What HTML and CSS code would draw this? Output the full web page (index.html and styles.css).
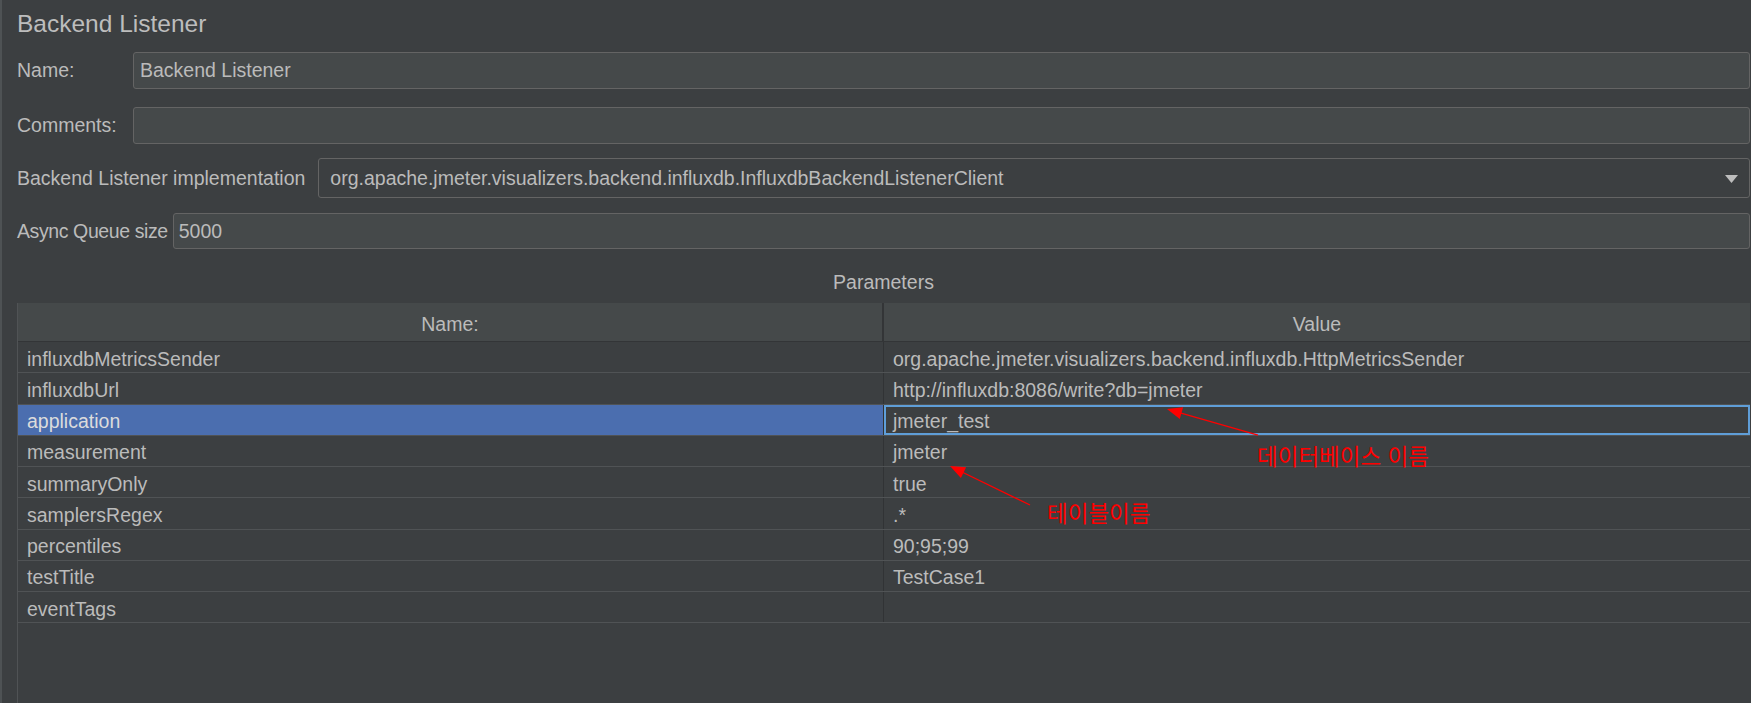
FILE: index.html
```html
<!DOCTYPE html>
<html lang="ko">
<head>
<meta charset="utf-8">
<title>Backend Listener</title>
<link rel="stylesheet" href="styles.css">
</head>
<body>
<div class="panel">
  <h1 class="title">Backend Listener</h1>

  <div class="form-grid">
    <div class="lbl">Name:</div>
    <div class="field">Backend Listener</div>
    <div class="lbl">Comments:</div>
    <div class="field"></div>
  </div>

  <div class="impl-row">
    <div class="lbl">Backend Listener implementation</div>
    <div class="combo">
      <span class="combo-text">org.apache.jmeter.visualizers.backend.influxdb.InfluxdbBackendListenerClient</span>
      <svg class="combo-arrow" width="13" height="8" viewBox="0 0 13 8"><polygon points="0,0 13,0 6.5,8" fill="#bdbdbd"/></svg>
    </div>
  </div>

  <div class="async-row">
    <div class="lbl lbl-async">Async Queue size</div>
    <div class="field field-async">5000</div>
  </div>

  <div class="params-title">Parameters</div>

  <div class="table">
    <div class="thead">
      <div class="th th-name">Name:</div>
      <div class="th">Value</div>
    </div>
    <div class="tr"><div class="td td-name">influxdbMetricsSender</div><div class="td">org.apache.jmeter.visualizers.backend.influxdb.HttpMetricsSender</div></div>
    <div class="tr"><div class="td td-name">influxdbUrl</div><div class="td">http://influxdb:8086/write?db=jmeter</div></div>
    <div class="tr tr-selected"><div class="td td-name">application</div><div class="td td-editor">jmeter_test</div></div>
    <div class="tr"><div class="td td-name">measurement</div><div class="td">jmeter</div></div>
    <div class="tr"><div class="td td-name">summaryOnly</div><div class="td">true</div></div>
    <div class="tr"><div class="td td-name">samplersRegex</div><div class="td">.*</div></div>
    <div class="tr"><div class="td td-name">percentiles</div><div class="td">90;95;99</div></div>
    <div class="tr"><div class="td td-name">testTitle</div><div class="td">TestCase1</div></div>
    <div class="tr"><div class="td td-name">eventTags</div><div class="td"></div></div>
    <div class="filler"></div>
  </div>
</div>

<svg class="annot-svg" width="1751" height="703" viewBox="0 0 1751 703">
  <line x1="1258" y1="435" x2="1181" y2="413" stroke="#ff0000" stroke-width="1.3"/>
  <polygon points="1167,409 1183.1,407.3 1179.8,418.9" fill="#ff0000"/>
  <line x1="1030" y1="505" x2="963" y2="472.5" stroke="#ff0000" stroke-width="1.3"/>
  <polygon points="950,466 966.1,467.2 960.9,478" fill="#ff0000"/>
</svg>
<span class="annot annot-db">데이터베이스 이름</span>
<span class="annot annot-table">테이블이름</span>
</body>
</html>
```

FILE: styles.css
```css
html, body {
  margin: 0;
  padding: 0;
  background: #3c3f41;
  overflow: hidden;
}

body {
  position: relative;
  width: 1751px;
  height: 703px;
  font-family: "Liberation Sans", Arial, sans-serif;
  font-size: 19.5px;
  color: #bbbbbb;
}

.panel {
  height: 703px;
  box-sizing: border-box;
  border-left: 2px solid #4e5254;
  padding-left: 15px;
  padding-right: 1px;
  display: flex;
  flex-direction: column;
}

.title {
  margin: 0;
  padding-top: 9.5px;
  font-size: 24.5px;
  line-height: 28px;
  font-weight: normal;
  color: #bdbdbd;
}

.lbl {
  display: flex;
  align-items: center;
  white-space: nowrap;
}

.lbl-async {
  letter-spacing: -0.4px;
}

.form-grid {
  margin-top: 14.5px;
  display: grid;
  grid-template-columns: 100px 1fr;
  grid-auto-rows: 37px;
  column-gap: 16px;
  row-gap: 18px;
}

.field {
  box-sizing: border-box;
  background: #45494a;
  border: 1px solid #646464;
  border-radius: 3px;
  padding-left: 6px;
  display: flex;
  align-items: center;
  white-space: nowrap;
}

.impl-row {
  margin-top: 14px;
  height: 40px;
  display: flex;
  gap: 13px;
}

.combo {
  flex: 1;
  box-sizing: border-box;
  background: #3c3f41;
  border: 1px solid #646464;
  border-radius: 3px;
  padding: 0 11px 0 11px;
  display: flex;
  align-items: center;
  justify-content: space-between;
}

.combo-text {
  white-space: nowrap;
}

.combo-arrow {
  display: block;
  margin-top: 1px;
}

.async-row {
  margin-top: 15px;
  height: 36px;
  display: flex;
  gap: 5px;
}

.field-async {
  flex: 1;
  padding-left: 5px;
}

.params-title {
  margin-top: 22.25px;
  line-height: 22px;
  text-align: center;
}

.table {
  margin-top: 9.75px;
  flex: 1;
  border-left: 1px solid #505355;
  display: flex;
  flex-direction: column;
}

.thead {
  height: 39px;
  flex: none;
  box-sizing: border-box;
  background: #45494a;
  border-bottom: 1px solid #333537;
  display: grid;
  grid-template-columns: 1fr 1fr;
}

.th {
  display: flex;
  align-items: center;
  justify-content: center;
  padding-top: 4px;
  box-sizing: border-box;
}

.th-name {
  border-right: 2px solid #333537;
}

.tr {
  height: 31.25px;
  flex: none;
  box-sizing: border-box;
  border-bottom: 1px solid #505355;
  display: grid;
  grid-template-columns: 1fr 1fr;
}

.td {
  display: flex;
  align-items: center;
  padding: 4px 0 0 9px;
  box-sizing: border-box;
  white-space: nowrap;
  overflow: hidden;
}

.td-name {
  border-right: 1px solid #313335;
}

.tr-selected .td-name {
  background: #4b6eaf;
  color: #dcdcdc;
}

.tr-selected .td-editor {
  border: 2px solid #5f9ed8;
  padding-left: 7px;
  background: #3c3f41;
}

.filler {
  flex: 1;
}

.annot-svg {
  position: absolute;
  top: 0;
  left: 0;
  pointer-events: none;
}

.annot {
  position: absolute;
  font-family: "Noto Sans CJK KR", "Noto Sans", sans-serif;
  font-size: 22.5px;
  line-height: 22.5px;
  color: #ff0000;
  white-space: nowrap;
}

.annot-db {
  left: 1257px;
  top: 443.5px;
}

.annot-table {
  left: 1047px;
  top: 500.5px;
}
```
